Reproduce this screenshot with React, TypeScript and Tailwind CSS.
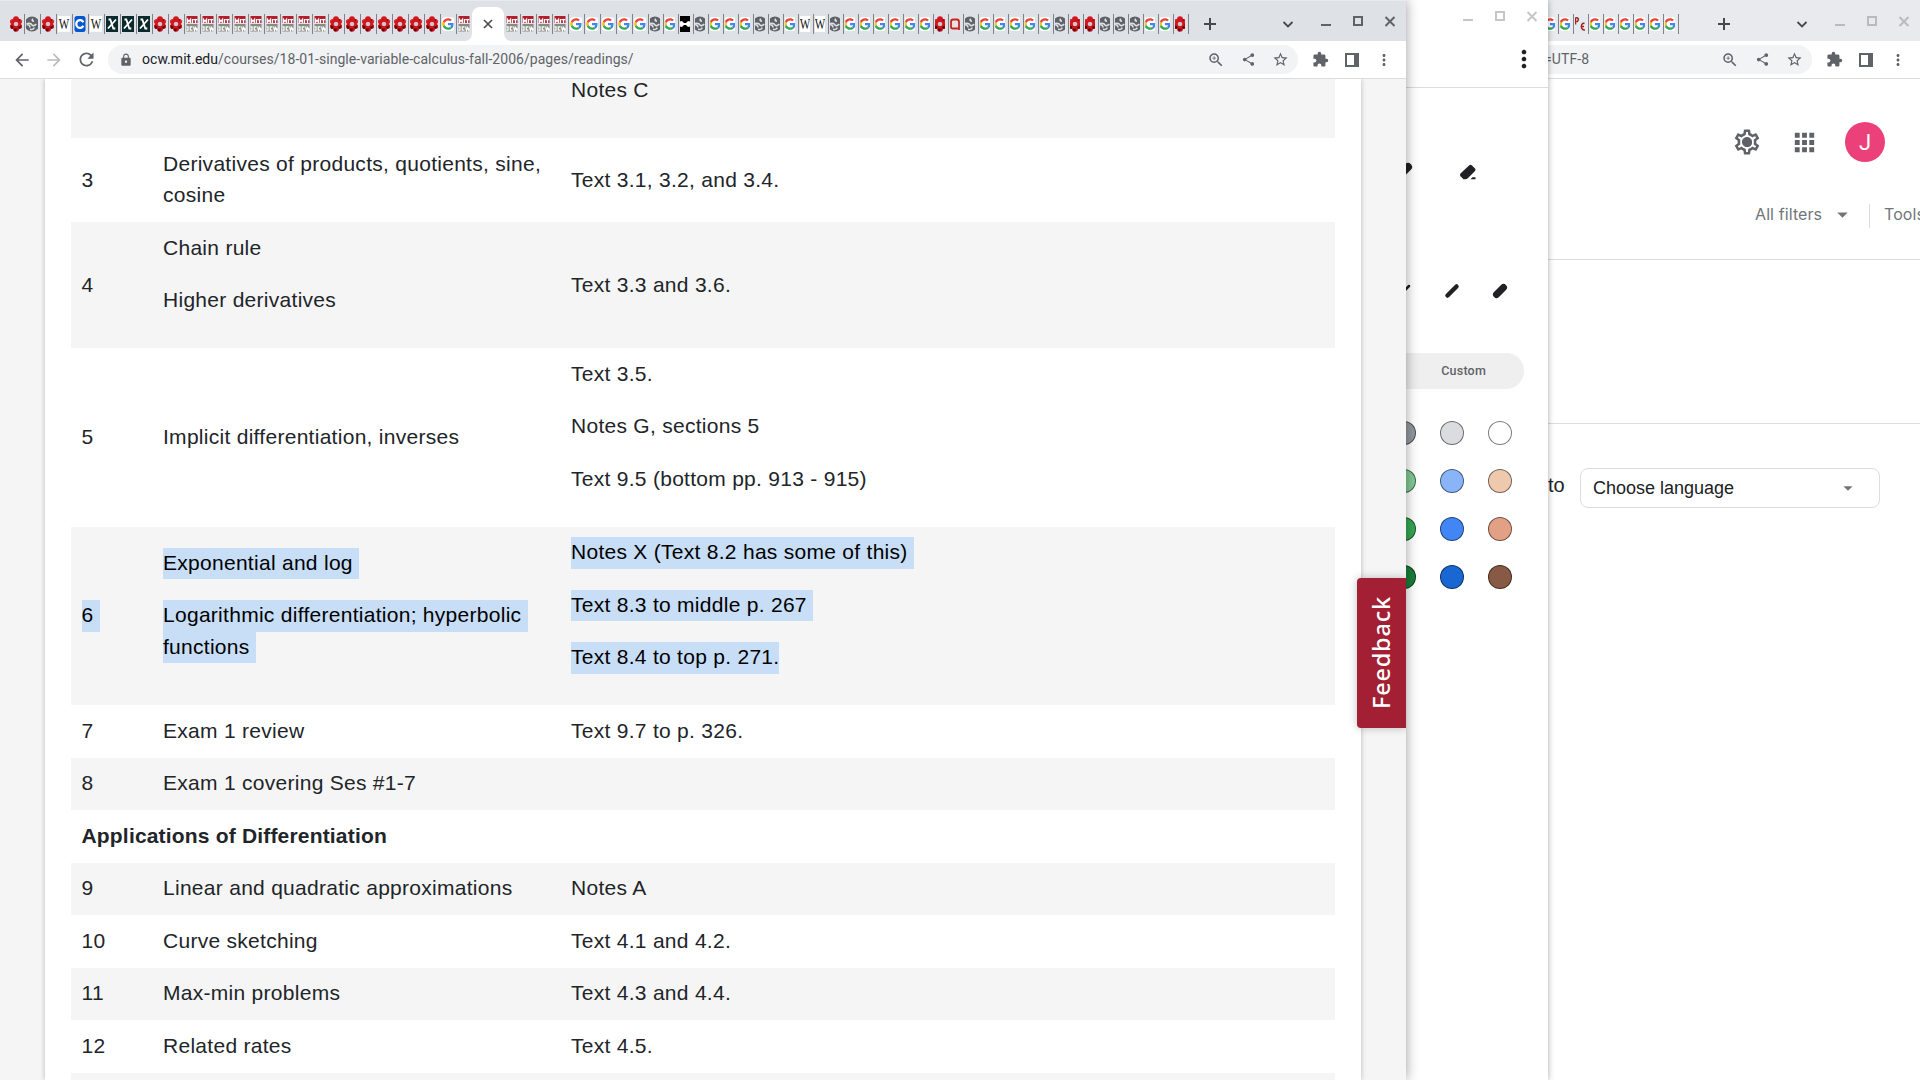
import type { ReactNode } from "react";
import {
  MdApps,
  MdArrowBack,
  MdArrowForward,
  MdExtension,
  MdLock,
  MdMoreVert,
  MdOutlineSettings,
  MdRefresh,
  MdShare,
  MdStarBorder,
  MdZoomIn,
  MdArrowDropDown,
} from "react-icons/md";

type Fav = "f" | "e" | "w" | "c" | "x" | "m" | "g" | "b" | "q" | "p";

/* Favicons are 16px squares whose sides are cropped by the narrow tabs. */
function Favicon({ kind, narrow }: { kind: Fav; narrow?: boolean }) {
  const box = narrow ? "3 0 10 16" : "2 0 12 16";
  return (
    <svg viewBox={box} className={narrow ? "h-4 w-[10px]" : "h-4 w-3"}>
      {kind === "f" && (
        <>
          <circle cx="8" cy="3.300" r="3" fill="#d2161e" />
          <circle cx="4.600" cy="5.600" r="2.700" fill="#e01b24" />
          <circle cx="11.400" cy="5.600" r="2.700" fill="#e01b24" />
          <circle cx="4.600" cy="10.400" r="2.700" fill="#c8131b" />
          <circle cx="11.400" cy="10.400" r="2.700" fill="#b00f17" />
          <circle cx="8" cy="12.700" r="3" fill="#c4141c" />
          <circle cx="8" cy="8" r="4.500" fill="#cf151d" />
          <path d="M3 9.500l2.500 1-1 2.500-1.500-.5zM11 10l2 1-1 1.500-2-.5zM6 12.500l3 .3-1 2.500H6.500zM10.500 3l2 .8-1 1.200z" fill="#5a060b" />
          <path d="M6.600 6h2.800l1 2-1 2H6.600l-1-2z" fill="#cfc6ca" />
        </>
      )}
      {kind === "e" && (
        <>
          <circle cx="8" cy="8" r="7.500" fill="#5f6368" />
          <path d="M9 2.800c-1.500 1-.8 2.200 1 2.300M2.500 7.800c3-.9 5 .2 5.500 1.200 1 1.400 3.400.2 4.200-1M6 13.300c2.500.5 4-.3 4-1.800M2.500 8.500c1.500 0 3.500 1 3.500 3" fill="none" stroke="#dee1e6" strokeWidth="1.600" />
        </>
      )}
      {kind === "w" && (
        <>
          <rect width="16" height="16" fill="#fff" />
          <text x="8" y="12.500" textAnchor="middle" fontFamily="Liberation Serif, serif" fontSize="14" fill="#111" textLength="10.500" lengthAdjust="spacingAndGlyphs">W</text>
        </>
      )}
      {kind === "c" && (
        <>
          <rect width="11" height="16" rx="2.500" x="2.500" fill="#0056d2" />
          <path d="M11.300 6.300A3.700 3.900 0 1 0 11.300 9.700" fill="none" stroke="#fff" strokeWidth="2.300" />
        </>
      )}
      {kind === "x" && (
        <>
          <rect width="16" height="16" fill="#0b2a2d" />
          <path d="M4.500 3.500h1.800l3 9h2M12 3.500L4 12.500" fill="none" stroke="#fff" strokeWidth="1.800" />
        </>
      )}
      {kind === "m" && (
        <>
          <rect width="11" height="7" x="2.500" fill="#b01f2b" />
          <rect width="11" height="7.500" x="2.500" y="8" fill="#8a8b80" />
          <path d="M3.500 7V3.500l1.500 2 1.500-2V7M8.500 3v4M9.500 3.700h4M11.500 3.500V7" fill="none" stroke="#fff" strokeWidth="1.300" />
          <path d="M2.500 10.800h1.500v3.400H2.500M8.500 10.800H6.300v3.400h2.200M9.500 10.500l1 4 1.200-3 1.200 3 .6-2" fill="none" stroke="#fff" strokeWidth="1.300" />
        </>
      )}
      {kind === "g" && (
        <>
          <rect width="16" height="14" y="1" rx="6" fill="#fff" />
          <g transform="translate(2.200 2.200) scale(.242)" >
            <path fill="#EA4335" d="M24 9.500c3.540 0 6.710 1.220 9.210 3.600l6.850-6.850C35.900 2.380 30.470 0 24 0 14.620 0 6.510 5.380 2.560 13.220l7.980 6.190C12.430 13.720 17.740 9.500 24 9.500z" />
            <path fill="#4285F4" d="M46.980 24.550c0-1.570-.15-3.090-.38-4.550H24v9.020h12.940c-.58 2.960-2.260 5.480-4.780 7.180l7.730 6c4.510-4.180 7.090-10.360 7.090-17.650z" />
            <path fill="#FBBC05" d="M10.530 28.590c-.48-1.450-.76-2.990-.76-4.590s.27-3.140.76-4.590l-7.980-6.190C.92 16.460 0 20.120 0 24c0 3.880.92 7.540 2.560 10.780l7.970-6.190z" />
            <path fill="#34A853" d="M24 48c6.480 0 11.930-2.130 15.890-5.810l-7.730-6c-2.150 1.450-4.920 2.300-8.160 2.300-6.260 0-11.570-4.220-13.470-9.910l-7.980 6.190C6.510 42.620 14.620 48 24 48z" />
          </g>
        </>
      )}
      {kind === "b" && (
        <>
          <rect width="16" height="16" fill="#000" />
          <path d="M3 5.500l2-.5 2 2h2l2-2 2 .5v5l-2 .5-2-2H7l-2 2-2-.5z" fill="#fff" />
        </>
      )}
      {kind === "q" && (
        <>
          <rect width="10" height="13" x="3" y="1.500" rx="2" fill="#f0dfe1" />
          <path d="M12 12.500H5.500Q4 12.500 4 11V6Q4 3.500 6 3.500h4q2 0 2 2.500v8" fill="none" stroke="#b92b27" strokeWidth="1.800" />
        </>
      )}
      {kind === "p" && (
        <>
          <rect width="16" height="16" fill="#e3eaf2" />
          <path d="M3.500 1.500v7M3.500 2c3-1 4 2 1 4M12.500 7.500c-4-1.500-4.500 7 .5 6.500M9 10.500h3" fill="none" stroke="#a3201f" strokeWidth="1.500" />
        </>
      )}
    </svg>
  );
}

function Tabs({ kinds, narrow, last }: { kinds: string; narrow?: boolean; last?: boolean }) {
  const list = kinds.split("") as Fav[];
  return (
    <>
      {list.map((k, i) => (
        <div key={i} className={`relative flex h-5 shrink-0 items-center ${narrow ? "w-[15px] pl-[2px]" : "w-4 pl-[2px]"}`}>
          <Favicon kind={k} narrow={narrow} />
          {!(last && i === list.length - 1) && <span className="absolute left-full top-0 h-5 w-px bg-[#7f8388]" />}
        </div>
      ))}
    </>
  );
}

function WindowButtons({ tone }: { tone: string }) {
  return (
    <div className={`flex ${tone}`}>
      <svg viewBox="0 0 32 42" className="h-[42px] w-8"><path d="M11 25h10" stroke="currentColor" strokeWidth="2" /></svg>
      <svg viewBox="0 0 32 42" className="h-[42px] w-8"><rect x="12" y="17" width="8" height="8" fill="none" stroke="currentColor" strokeWidth="2" /></svg>
      <svg viewBox="0 0 32 42" className="h-[42px] w-8"><path d="M11.500 17l9 9M20.500 17l-9 9" stroke="currentColor" strokeWidth="2" /></svg>
    </div>
  );
}

function PlusIcon() {
  return (
    <svg viewBox="0 0 44 42" className="h-[42px] w-11 shrink-0"><path d="M16 24h12M22 18v12" stroke="#45484c" strokeWidth="2" /></svg>
  );
}

function ChevronIcon() {
  return (
    <svg viewBox="0 0 44 42" className="h-[42px] w-11 shrink-0"><path d="M17.500 22l4.500 4.500 4.500-4.500" fill="none" stroke="#45484c" strokeWidth="1.800" /></svg>
  );
}

function Slot({ children }: { children: ReactNode }) {
  return <div className="flex w-8 shrink-0 items-center justify-center">{children}</div>;
}

/* The icons inside the right end of the address bar. */
function AddressActions() {
  return (
    <div className="ml-auto flex h-[29px] text-[#5f6368]">
      <Slot><MdZoomIn size={18} /></Slot>
      <Slot><MdShare size={15} /></Slot>
      <Slot><MdStarBorder size={17} /></Slot>
    </div>
  );
}

function ToolbarEnd() {
  return (
    <div className="ml-[6px] flex h-[29px] text-[#5f6368]">
      <Slot><MdExtension size={17} /></Slot>
      <Slot>
        <svg viewBox="0 0 14 14" className="h-[14px] w-[14px]"><path d="M1 1h12v12H1z" fill="none" stroke="currentColor" strokeWidth="2" /><path d="M9 1h5v12H9z" fill="currentColor" /></svg>
      </Slot>
      <Slot><MdMoreVert size={18} /></Slot>
    </div>
  );
}

function TranslateWindow() {
  return (
    <div className="absolute inset-0 flex flex-col items-stretch bg-white pl-[1543px]">
      <div className="-ml-10 flex h-[41px] shrink-0 bg-[#e8eaed] pl-10 pt-0">
        <div className="mt-[14px] flex">
          <Tabs kinds="ggpgggggg" narrow />
        </div>
        <div className="ml-6 flex"><PlusIcon /></div>
        <div className="ml-auto flex"><ChevronIcon /><WindowButtons tone="text-[#b8babd]" /></div>
      </div>
      <div className="flex h-[38px] shrink-0 border-b border-[#dadce0] pt-1">
        <div className="flex h-[29px] w-[269px] items-center rounded-r-full bg-[#f1f3f4] pr-[2px]">
          <span className="pl-px font-[Roboto,sans-serif] text-[14px] tracking-[0.1px] text-[#5f6368]">=UTF-8</span>
          <AddressActions />
        </div>
        <ToolbarEnd />
      </div>
      <div className="flex h-[126px] shrink-0 items-center justify-end pr-[35px] text-[#5f6368]">
        <div className="grid place-items-center">
          <MdOutlineSettings size={30} className="col-start-1 row-start-1" />
          <span className="col-start-1 row-start-1 h-[9px] w-[9px] rounded-full bg-[#5f6368]" />
        </div>
        <MdApps size={29} className="ml-[28px]" />
        <div className="ml-[26px] flex h-10 w-10 items-center justify-center rounded-full bg-[#ec407a] font-[Roboto,sans-serif] text-[22px] text-white">J</div>
      </div>
      <div className="-mt-px flex h-[56px] shrink-0 items-start overflow-hidden border-b border-[#dadce0] pl-[212px] font-[Inter,sans-serif] text-[16px] tracking-[0.1px] text-[#70757a]">
        <span className="w-[75px] shrink-0 whitespace-nowrap leading-5">All filters</span>
        <MdArrowDropDown size={25} className="-mt-[2px] shrink-0" />
        <span className="-mt-px ml-[14px] h-[25px] w-px shrink-0 bg-[#dadce0]" />
        <span className="ml-[14px] leading-5">Tools</span>
      </div>
      <div className="h-[164px] shrink-0 border-b border-[#dadce0]" />
      <div className="flex pt-11 font-['Liberation_Sans',sans-serif] text-[#202124]">
        <span className="w-[37px] pl-[5px] pt-[5px] text-[20px] leading-6">to</span>
        <div className="flex h-[40px] w-[300px] items-center rounded-lg border border-[#dadce0] pl-3 text-[18px]">
          <span>Choose language</span>
          <MdArrowDropDown size={22} className="ml-auto mr-[20px] text-[#70757a]" />
        </div>
      </div>
    </div>
  );
}

const SWATCHES = [
  ["bg-[#9298a0]", "bg-[#dadce0]", "bg-white"],
  ["bg-[#81c995]", "bg-[#8ab4f8]", "bg-[#eec9ae]"],
  ["bg-[#34a853]", "bg-[#4285f4]", "bg-[#e2a185]"],
  ["bg-[#188038]", "bg-[#1967d2]", "bg-[#885a45]"],
];

function CanvasWindow() {
  return (
    <div className="absolute inset-y-0 left-0 flex w-[1548px] flex-col overflow-hidden bg-white shadow-[0_0_6px_rgba(0,0,0,0.35)]">
      <div className="-mt-[5px] flex h-[42px] shrink-0 justify-end"><WindowButtons tone="text-[#c6c6c6]" /></div>
      <div className="flex h-[51px] shrink-0 justify-end border-b border-[#dadce0] pr-[10px] pt-[8px] text-[#202124]">
        <MdMoreVert size={28} />
      </div>
      <div className="mt-[72px] flex h-6 shrink-0 items-center justify-end gap-[40px] pr-[68px]">
        <svg viewBox="0 0 24 24" className="h-6 w-6"><path d="M8 15l8-8" stroke="#202124" strokeWidth="8" strokeLinecap="round" /></svg>
        <svg viewBox="0 0 24 24" className="h-6 w-6">
          <path d="M4.500 13.500L13 5.500q1.500-1.500 3 0l3 3q1.200 1.300 0 2.600L12 18q-1 1.300-3 1.300H7.500L4.500 16.300q-1.200-1.300 0-2.800z" fill="#202124" />
          <path d="M14.500 19.300h5v-2h-3z" fill="#202124" />
        </svg>
      </div>
      <div className="mt-[95px] flex h-6 shrink-0 items-center justify-end gap-6 pr-9">
        <svg viewBox="0 0 24 24" className="h-6 w-6"><path d="M7 17L17 7" stroke="#202124" strokeWidth="2.500" strokeLinecap="round" /></svg>
        <svg viewBox="0 0 24 24" className="h-6 w-6"><path d="M7.500 16.500l9-9" stroke="#202124" strokeWidth="4.500" strokeLinecap="round" /></svg>
        <svg viewBox="0 0 24 24" className="h-6 w-6"><path d="M8.500 15.500l7-7" stroke="#202124" strokeWidth="7" strokeLinecap="round" /></svg>
      </div>
      <div className="mr-6 mt-[50px] flex h-9 w-[240px] shrink-0 items-center justify-end self-end rounded-full bg-[#efefef] pr-[38px] font-[Roboto,sans-serif] text-[12.500px] font-medium tracking-[0.2px] text-[#5f6368]">
        Custom
      </div>
      <div className="mr-9 mt-8 grid grid-cols-[24px_24px_24px] gap-6 self-end">
        {SWATCHES.flat().map((c) => (
          <span key={c} className={`h-6 w-6 rounded-full border border-black/50 ${c}`} />
        ))}
      </div>
    </div>
  );
}

/* A selected run of text, highlighted over the full line height. */
function Sel({ children }: { children: ReactNode }) {
  return (
    <span className="-mb-[0.75px] mt-[0.75px] block w-fit whitespace-pre bg-[#c7def6] pb-[1.5px] leading-[30px] text-black">
      {children}
    </span>
  );
}

function Para({ children }: { children: ReactNode }) {
  return <p className="mb-[21px]">{children}</p>;
}

const ROWS: { n: ReactNode; topic: ReactNode; text?: ReactNode }[] = [
  { n: "3", topic: <>Derivatives of products, quotients, sine,<br />cosine</>, text: "Text 3.1, 3.2, and 3.4." },
  { n: "4", topic: <><Para>Chain rule</Para><Para>Higher derivatives</Para></>, text: "Text 3.3 and 3.6." },
  {
    n: "5",
    topic: "Implicit differentiation, inverses",
    text: <><Para>Text 3.5.</Para><Para>Notes G, sections 5</Para><Para>Text 9.5 (bottom pp. 913 - 915)</Para></>,
  },
  {
    n: <Sel>{"6 "}</Sel>,
    topic: (
      <>
        <div className="mb-[21px] flow-root"><Sel>{"Exponential and log "}</Sel></div>
        <div className="mb-[21px] flow-root">
          <div className="flow-root"><Sel>{"Logarithmic differentiation; hyperbolic "}</Sel></div>
          <div className="flow-root"><Sel>{"functions "}</Sel></div>
        </div>
      </>
    ),
    text: (
      <>
        <div className="mb-[21px] flow-root"><Sel>{"Notes X (Text 8.2 has some of this) "}</Sel></div>
        <div className="mb-[21px] flow-root"><Sel>{"Text 8.3 to middle p. 267 "}</Sel></div>
        <div className="mb-[21px] flow-root"><Sel>Text 8.4 to top p. 271.</Sel></div>
      </>
    ),
  },
  { n: "7", topic: "Exam 1 review", text: "Text 9.7 to p. 326." },
  { n: "8", topic: "Exam 1 covering Ses #1-7" },
];

const ROWS_2 = [
  { n: "9", topic: "Linear and quadratic approximations", text: "Notes A" },
  { n: "10", topic: "Curve sketching", text: "Text 4.1 and 4.2." },
  { n: "11", topic: "Max-min problems", text: "Text 4.3 and 4.4." },
  { n: "12", topic: "Related rates", text: "Text 4.5." },
];

function Row({ n, topic, text, shaded }: { n: ReactNode; topic: ReactNode; text?: ReactNode; shaded: boolean }) {
  return (
    <div className={`grid shrink-0 grid-cols-[81.5px_408px_1fr] items-center px-[10.5px] pb-[11.25px] pt-[9.75px] ${shaded ? "bg-[#f5f5f5]" : ""}`}>
      <div>{n}</div>
      <div>{topic}</div>
      <div>{text}</div>
    </div>
  );
}

const URL_HOST = "ocw.mit.edu";
const URL_PATH = "/courses/18-01-single-variable-calculus-fall-2006/pages/readings/";

function ReadingsWindow() {
  return (
    <div className="absolute inset-y-0 left-0 flex w-[1406px] flex-col bg-white shadow-[0_0_12px_rgba(0,0,0,0.4)]">
      <div className="flex h-[41px] shrink-0 border-t border-[#e8ebee] bg-[#dee1e6] pl-2">
        <div className="mt-[13px] flex">
          <Tabs kinds="fefwcwxxxffmmmmmmmmmfffffffgm" last />
        </div>
        <div className="relative mt-[6px] flex h-[34px] w-8 shrink-0 justify-center rounded-t-lg bg-white pt-3">
          <svg viewBox="0 0 10 10" className="h-[10px] w-[10px]"><path d="M1 1l8 8M9 1L1 9" stroke="#45484c" strokeWidth="1.600" /></svg>
          <svg viewBox="0 0 8 8" className="absolute -left-2 bottom-0 h-2 w-2"><path d="M8 0v8H0Q8 8 8 0z" fill="#fff" /></svg>
          <svg viewBox="0 0 8 8" className="absolute -right-2 bottom-0 h-2 w-2"><path d="M0 0v8h8Q0 8 0 0z" fill="#fff" /></svg>
        </div>
        <div className="mt-[13px] flex">
          <Tabs kinds="mmmmggggg" />
          <Tabs kinds="egbegggeegwwegggggg" narrow />
          <Tabs kinds="fqegggggeffeeeggf" narrow />
        </div>
        <div className="-mt-px flex"><PlusIcon /></div>
        <div className="-mt-px ml-auto flex"><ChevronIcon /><WindowButtons tone="text-[#5f6368]" /></div>
      </div>
      <div className="flex h-[38px] shrink-0 border-b border-[#dadce0] pt-1">
        <div className="flex h-[29px] w-[108px] text-[#5f6368]">
          <div className="ml-[6px] flex">
            <Slot><MdArrowBack size={20} /></Slot>
            <Slot><MdArrowForward size={20} className="text-[#babcbe]" /></Slot>
            <Slot><MdRefresh size={21} /></Slot>
          </div>
        </div>
        <div className="flex h-[29px] w-[1190px] items-center rounded-full bg-[#f1f3f4] pl-[11px] pr-[2px]">
          <MdLock size={14} className="text-[#5f6368]" />
          <span className="ml-[9px] whitespace-nowrap font-[Roboto,sans-serif] text-[14px] tracking-[0.035px] text-[#5f6368]">
            <span className="text-[#202124]">{URL_HOST}</span>{URL_PATH}
          </span>
          <AddressActions />
        </div>
        <ToolbarEnd />
      </div>
      <div className="relative min-h-0 flex-1 overflow-hidden bg-[#f5f5f5]">
        <div className="ml-[45px] flex h-full w-[1316px] flex-col overflow-hidden bg-white px-[26px] font-['Liberation_Sans',sans-serif] text-[21px] leading-[31.5px] tracking-[0.28px] text-[#212529] shadow-[0_0_5px_rgba(0,0,0,0.25)]">
          <div className="h-[59px] shrink-0 bg-[#f5f5f5] pl-[500px]">
            <p className="-mt-[5px]">Notes C</p>
          </div>
          {ROWS.map((r, i) => (
            <Row key={i} {...r} shaded={i % 2 === 1} />
          ))}
          <div className="shrink-0 px-[10.5px] pb-[11.25px] pt-[9.75px] font-bold tracking-[0.18px]">Applications of Differentiation</div>
          {ROWS_2.map((r, i) => (
            <Row key={r.n} {...r} shaded={i % 2 === 0} />
          ))}
          <div className="h-[20px] shrink-0 bg-[#f5f5f5]" />
        </div>
        <div className="absolute right-0 top-[499px] flex h-[150px] w-[49px] items-center justify-center rounded-l bg-[#a31f34] shadow-[0_0_8px_rgba(0,0,0,0.25)]">
          <span className="rotate-180 font-['Noto_Sans',sans-serif] text-[23.5px] font-medium leading-none tracking-[0.8px] text-white [writing-mode:vertical-rl]">Feedback</span>
        </div>
      </div>
    </div>
  );
}

export default function App() {
  return (
    <div className="relative h-[1080px] w-[1920px] overflow-hidden bg-white">
      <TranslateWindow />
      <CanvasWindow />
      <ReadingsWindow />
    </div>
  );
}
